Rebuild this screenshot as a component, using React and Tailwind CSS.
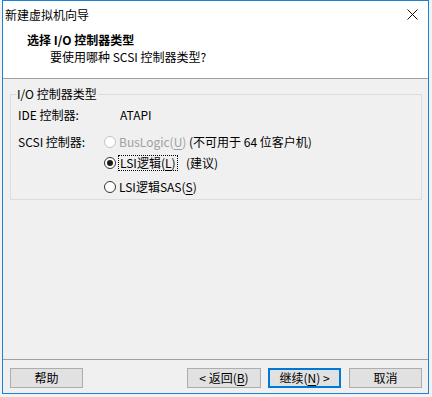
const F = "font-['Microsoft_YaHei','Noto_Sans_CJK_SC',sans-serif]";

function Radio({ checked, disabled }) {
  return (
    <span
      className={`flex h-[12px] w-[12px] shrink-0 items-center justify-center rounded-full border bg-white ${
        disabled ? "border-[#c4c4c4]" : "border-[#333333]"
      }`}
    >
      {checked && <span className="h-[6px] w-[6px] rounded-full bg-[#1a1a1a]" />}
    </span>
  );
}

function U({ children }) {
  return <span className="underline underline-offset-[2px]">{children}</span>;
}

function Btn({ children, primary, w }) {
  return (
    <div
      className={`flex h-[20px] items-center justify-center text-[12px] leading-[16px] text-black ${w} ${
        primary ? "border-2 border-[#0078d7] bg-[#e1e1e1]" : "border border-[#adadad] bg-[#e1e1e1]"
      }`}
    >
      {children}
    </div>
  );
}

export default function App() {
  return (
    <div className={`h-[397px] w-[432px] bg-[#f2f2f2] pl-[2px] ${F}`}>
      <div className="flex h-[394px] w-[427px] flex-col border border-[#1883d7] bg-[#f0f0f0]">
        {/* title bar */}
        <div className="flex h-[28px] items-center justify-between bg-white pl-[2px] pr-[10px]">
          <span className="text-[12px] leading-[16px] text-black">新建虚拟机向导</span>
          <svg width="11" height="11" viewBox="0 0 11 11" className="mt-[-2px]">
            <path d="M0.5 0.5 L10.5 10.5 M10.5 0.5 L0.5 10.5" stroke="#111" strokeWidth="1" fill="none" />
          </svg>
        </div>
        {/* header */}
        <div className="flex h-[50px] flex-col border-b border-[#a0a0a0] bg-white pt-[3px]">
          <div className="pl-[24px] text-[12px] font-bold leading-[16px] text-black">选择 I/O 控制器类型</div>
          <div className="mt-[1px] pl-[47px] text-[12px] leading-[16px] text-black">要使用哪种 SCSI 控制器类型?</div>
        </div>
        {/* body */}
        <div className="flex h-[280px] flex-col pl-[7px] pr-[6px] pt-[15px]">
          <div className="relative flex flex-col border border-[#dcdcdc] pb-[4px] text-[12px] leading-[16px] text-black">
            <span className="absolute left-[5px] top-[-9px] bg-[#f0f0f0] px-[1px] leading-[16px]">I/O 控制器类型</span>
            <div className="mt-[12px] flex h-[16px] items-center pl-[7px]">
              <span className="w-[102px]">IDE 控制器:</span>
              <span>ATAPI</span>
            </div>
            <div className="mt-[11px] flex h-[16px] items-center pl-[7px]">
              <span className="w-[86px]">SCSI 控制器:</span>
              <div className="flex w-[84px] items-center gap-[3px]">
                <Radio disabled />
                <span className="text-[#a0a0a0]">
                  BusLogic(<U>U</U>)
                </span>
              </div>
              <span className="ml-[1px]">(不可用于 64 位客户机)</span>
            </div>
            <div className="mt-[5px] flex h-[16px] items-center pl-[93px]">
              <div className="flex w-[82px] items-center gap-[2px]">
                <Radio checked />
                <span className="border border-dotted border-black px-[1px] leading-[14px]">
                  LSI逻辑(<U>L</U>)
                </span>
              </div>
              <span>(建议)</span>
            </div>
            <div className="mt-[8px] flex h-[16px] items-center pl-[93px]">
              <div className="flex items-center gap-[3px]">
                <Radio />
                <span>
                  LSI逻辑SAS(<U>S</U>)
                </span>
              </div>
            </div>
          </div>
        </div>
        {/* footer */}
        <div className="flex flex-1 items-start border-t border-[#a0a0a0] pl-[7px] pr-[6px] pt-[8px]">
          <Btn w="w-[73px]">帮助</Btn>
          <div className="flex-1" />
          <Btn w="w-[74px]">
            &lt; 返回(<U>B</U>)
          </Btn>
          <div className="w-[7px]" />
          <Btn primary w="w-[73px]">
            继续(<U>N</U>) &gt;
          </Btn>
          <div className="w-[8px]" />
          <Btn w="w-[73px]">取消</Btn>
        </div>
      </div>
    </div>
  );
}
